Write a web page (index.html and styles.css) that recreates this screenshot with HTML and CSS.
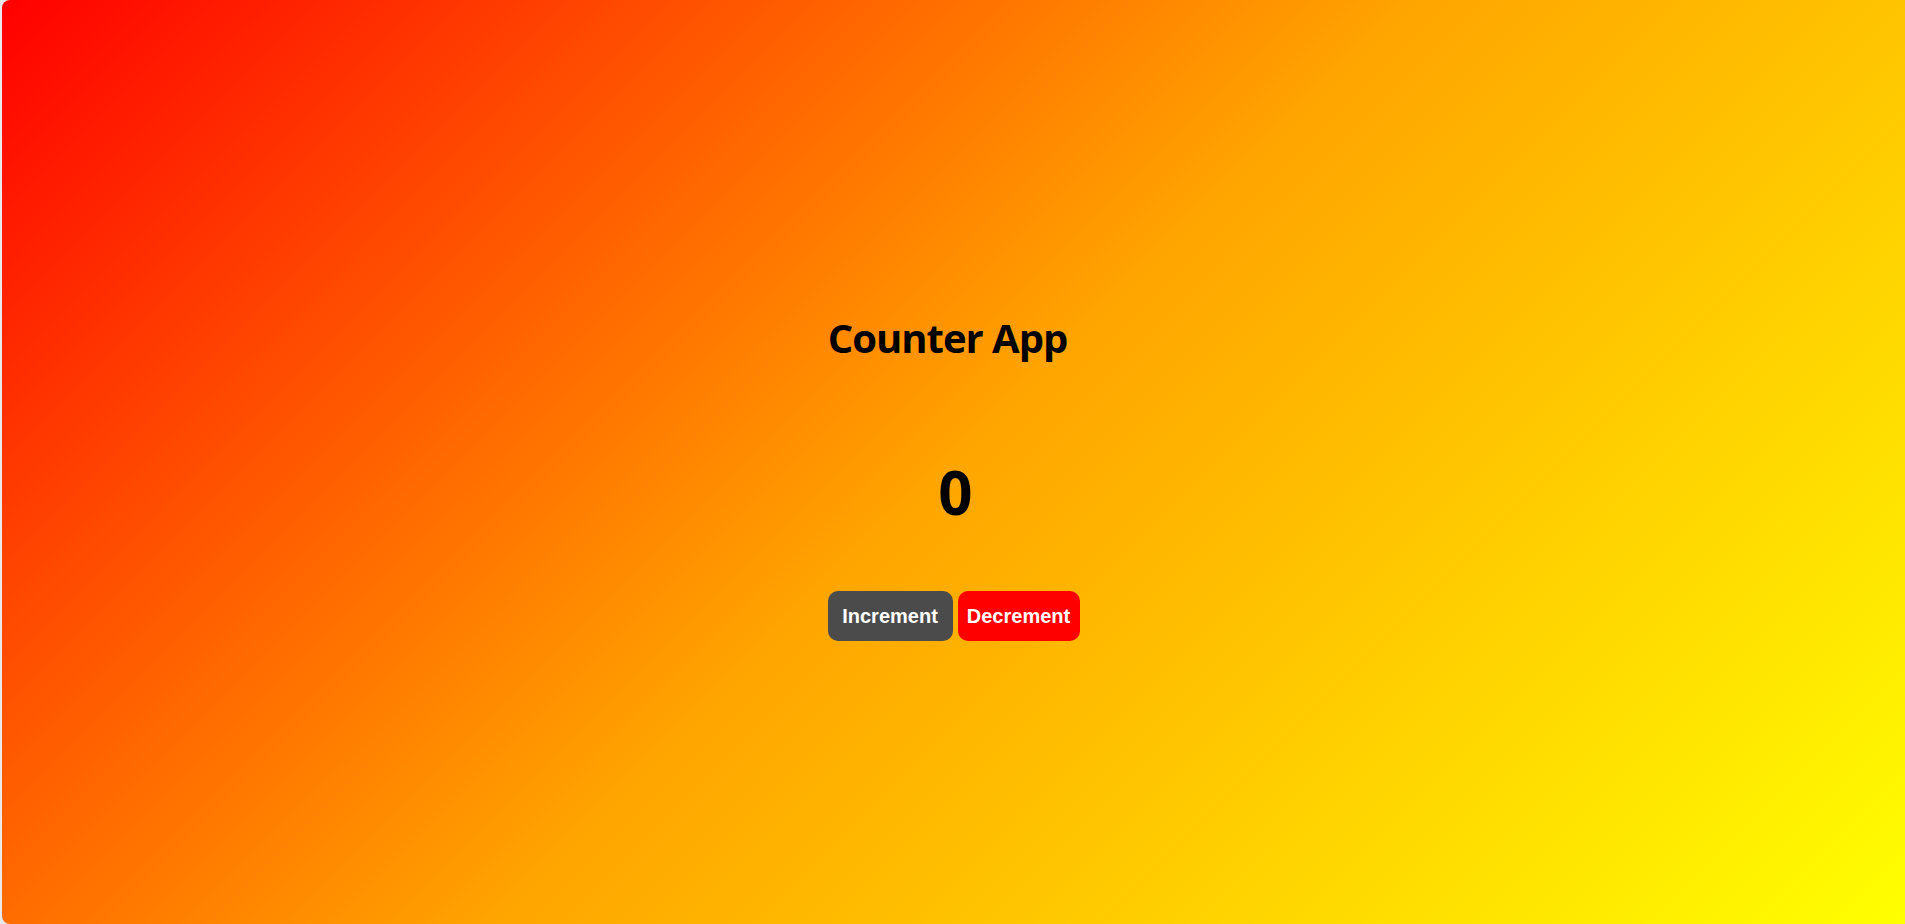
FILE: index.html
```html
<!DOCTYPE html>
<html lang="en">
<head>
<meta charset="utf-8">
<title>Counter App</title>
<link rel="stylesheet" href="styles.css">
</head>
<body>
<div class="app">
  <h1 class="title">Counter App</h1>
  <div class="count">0</div>
  <div class="actions">
    <button class="btn btn-inc">Increment</button>
    <button class="btn btn-dec">Decrement</button>
  </div>
</div>
</body>
</html>
```
FILE: styles.css
```css
html, body {
  margin: 0;
  padding: 0;
  overflow: hidden;
}
body {
  background: #e9e9e9;
  height: 924px;
}
.app {
  margin-left: 2px;
  height: 924px;
  box-sizing: border-box;
  border-radius: 8px 0 0 8px;
  background: linear-gradient(135deg, #ff0000, #ffa500, #ffff00);
  display: flex;
  flex-direction: column;
  align-items: center;
  padding-top: 314px;
  font-family: "Open Sans", "Noto Sans", sans-serif;
}
.title {
  margin: 0 12px 0 0;
  font-size: 40px;
  line-height: 48px;
  font-weight: 700;
  letter-spacing: -1px;
  color: #000;
}
.count {
  margin-top: 94px;
  font-size: 60px;
  line-height: 72px;
  font-weight: 700;
  color: #000;
  margin-left: 4px;
}
.actions {
  margin-top: 63px;
  display: flex;
  gap: 5px;
}
.btn {
  height: 50px;
  border: none;
  border-radius: 10px;
  color: #fff;
  font-family: "Liberation Sans", Arial, sans-serif;
  font-weight: 700;
  font-size: 20px;
  padding: 0;
  cursor: pointer;
}
.btn-inc {
  width: 125px;
  background: #4b4b4b;
}
.btn-dec {
  width: 122px;
  background: #ff0000;
}
```
